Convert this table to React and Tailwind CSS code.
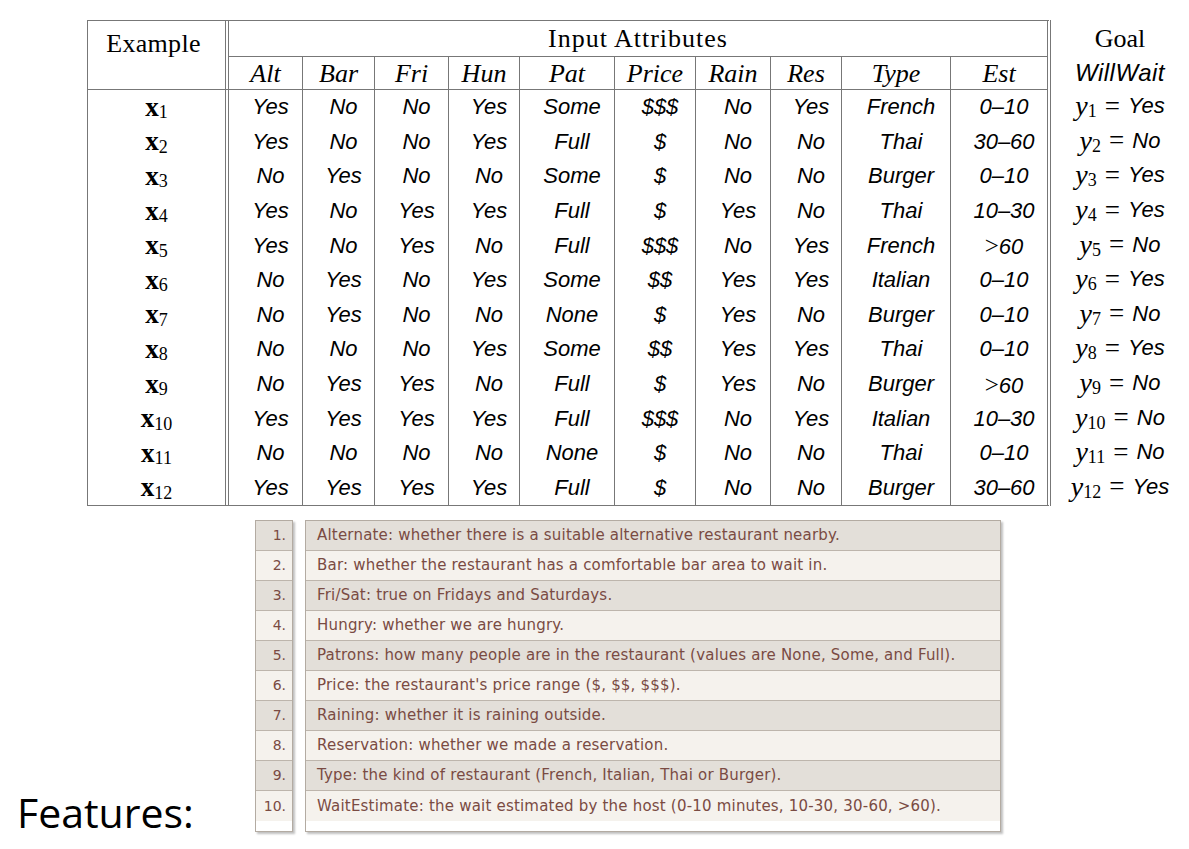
import React from "react";

const colW = [
  "w-[73px]",
  "w-[72px]",
  "w-[74px]",
  "w-[71px]",
  "w-[95px]",
  "w-[81px]",
  "w-[75px]",
  "w-[71px]",
  "w-[109px]",
  "w-[97px]",
];
const heads = ["Alt", "Bar", "Fri", "Hun", "Pat", "Price", "Rain", "Res", "Type", "Est"];

const rows = [
  ["Yes", "No", "No", "Yes", "Some", "$$$", "No", "Yes", "French", "0–10", "Yes"],
  ["Yes", "No", "No", "Yes", "Full", "$", "No", "No", "Thai", "30–60", "No"],
  ["No", "Yes", "No", "No", "Some", "$", "No", "No", "Burger", "0–10", "Yes"],
  ["Yes", "No", "Yes", "Yes", "Full", "$", "Yes", "No", "Thai", "10–30", "Yes"],
  ["Yes", "No", "Yes", "No", "Full", "$$$", "No", "Yes", "French", ">60", "No"],
  ["No", "Yes", "No", "Yes", "Some", "$$", "Yes", "Yes", "Italian", "0–10", "Yes"],
  ["No", "Yes", "No", "No", "None", "$", "Yes", "No", "Burger", "0–10", "No"],
  ["No", "No", "No", "Yes", "Some", "$$", "Yes", "Yes", "Thai", "0–10", "Yes"],
  ["No", "Yes", "Yes", "No", "Full", "$", "Yes", "No", "Burger", ">60", "No"],
  ["Yes", "Yes", "Yes", "Yes", "Full", "$$$", "No", "Yes", "Italian", "10–30", "No"],
  ["No", "No", "No", "No", "None", "$", "No", "No", "Thai", "0–10", "No"],
  ["Yes", "Yes", "Yes", "Yes", "Full", "$", "No", "No", "Burger", "30–60", "Yes"],
];

const features = [
  "Alternate: whether there is a suitable alternative restaurant nearby.",
  "Bar: whether the restaurant has a comfortable bar area to wait in.",
  "Fri/Sat: true on Fridays and Saturdays.",
  "Hungry: whether we are hungry.",
  "Patrons: how many people are in the restaurant (values are None, Some, and Full).",
  "Price: the restaurant's price range ($, $$, $$$).",
  "Raining: whether it is raining outside.",
  "Reservation: whether we made a reservation.",
  "Type: the kind of restaurant (French, Italian, Thai or Burger).",
  "WaitEstimate: the wait estimated by the host (0-10 minutes, 10-30, 30-60, >60).",
];

const serif = "font-['Liberation_Serif',serif]";
const sans = "font-['Liberation_Sans',sans-serif] italic text-[22px]";

function Val({ v }) {
  if (v.startsWith(">")) {
    return (
      <span className={sans}>
        <span className={`${serif} not-italic text-[25px]`}>&gt;</span>
        {v.slice(1)}
      </span>
    );
  }
  return <span className={sans}>{v}</span>;
}

export default function App() {
  return (
    <div className="w-[1189px] h-[849px] bg-white text-black overflow-hidden">
      {/* Top table */}
      <div className="flex pl-[87px] pt-[20px]">
        <div className="flex flex-col border-l border-t border-b border-r-4 border-double border-l-[#777] border-t-[#777] border-b-[#777] border-r-[#777]">
          {/* header */}
          <div className="flex border-b border-[#777]">
            <div className={`w-[141px] pr-[6px] border-r-4 border-double border-[#777] flex justify-center pt-[10px] ${serif} text-[26px] leading-[26px] tracking-[0.3px]`}>
              Example
            </div>
            <div className="flex flex-col w-[818px]">
              <div className={`h-[36px] border-b border-[#777] flex items-center justify-center ${serif} text-[26px] tracking-[1px]`}>
                Input Attributes
              </div>
              <div className="flex h-[32px]">
                {heads.map((h, j) => (
                  <div
                    key={h}
                    className={`${colW[j]} ${j > 0 ? "border-l border-[#777]" : ""} flex items-center justify-center ${serif} italic text-[26px] leading-none pt-[1px]`}
                  >
                    {h}
                  </div>
                ))}
              </div>
            </div>
          </div>
          {/* body */}
          {rows.map((r, i) => (
            <div key={i} className="flex h-[34.6px]">
              <div className={`w-[141px] border-r-4 border-double border-[#777] flex items-center justify-center ${serif}`}>
                <span className="font-bold text-[27px] leading-none">x</span>
                <span className="text-[18px] leading-none relative top-[5px]">{i + 1}</span>
              </div>
              {r.slice(0, 10).map((v, j) => (
                <div
                  key={j}
                  className={`${colW[j]} ${j > 0 ? "border-l border-[#777]" : ""} flex items-center justify-center pl-[10px] leading-none`}
                >
                  <Val v={v} />
                </div>
              ))}
            </div>
          ))}
        </div>
        {/* Goal column */}
        <div className="flex flex-col w-[138px]">
          <div className={`h-[36px] flex items-center justify-center ${serif} text-[26px]`}>Goal</div>
          <div className="h-[33px] flex items-center justify-center font-['Liberation_Sans',sans-serif] italic text-[24px] tracking-[0.5px]">
            WillWait
          </div>
          {rows.map((r, i) => (
            <div key={i} className="h-[34.6px] flex items-center justify-center leading-none">
              <span className={`${serif} italic text-[28px]`}>y</span>
              <span className={`${serif} text-[18px] relative top-[5px]`}>{i + 1}</span>
              <span className={`${serif} text-[27px] mx-[8px]`}>=</span>
              <span className={sans}>{r[10]}</span>
            </div>
          ))}
        </div>
      </div>

      {/* Features */}
      <div className="flex mt-[14px]">
        <div className="w-[255px] pl-[17px] pt-[272px] font-['Open_Sans',sans-serif] text-[41px] leading-[40px]">
          Features:
        </div>
        <div className="w-[38px] flex flex-col border border-[#b3aba2] shadow-[2px_2px_2px_rgba(0,0,0,0.25)] font-['DejaVu_Sans',sans-serif] text-[14px] text-[#7a4b43]">
          {features.map((f, i) => (
            <div
              key={i}
              className={`h-[30px] flex items-center justify-end pr-[6px] ${i < 9 ? "border-b border-[#bdb5ac]" : ""} ${i % 2 === 0 ? "bg-[#e3dfd9]" : "bg-[#f5f2ed]"}`}
            >
              {i + 1}.
            </div>
          ))}
        </div>
        <div className="w-[696px] ml-[12px] flex flex-col border border-[#b3aba2] shadow-[2px_2px_2px_rgba(0,0,0,0.25)] font-['DejaVu_Sans',sans-serif] text-[15px] tracking-[0.2px] text-[#7a4b43]">
          {features.map((f, i) => (
            <div
              key={i}
              className={`h-[30px] flex items-center pl-[11px] whitespace-nowrap ${i < 9 ? "border-b border-[#bdb5ac]" : ""} ${i % 2 === 0 ? "bg-[#e3dfd9]" : "bg-[#f5f2ed]"}`}
            >
              {f}
            </div>
          ))}
        </div>
      </div>
    </div>
  );
}
